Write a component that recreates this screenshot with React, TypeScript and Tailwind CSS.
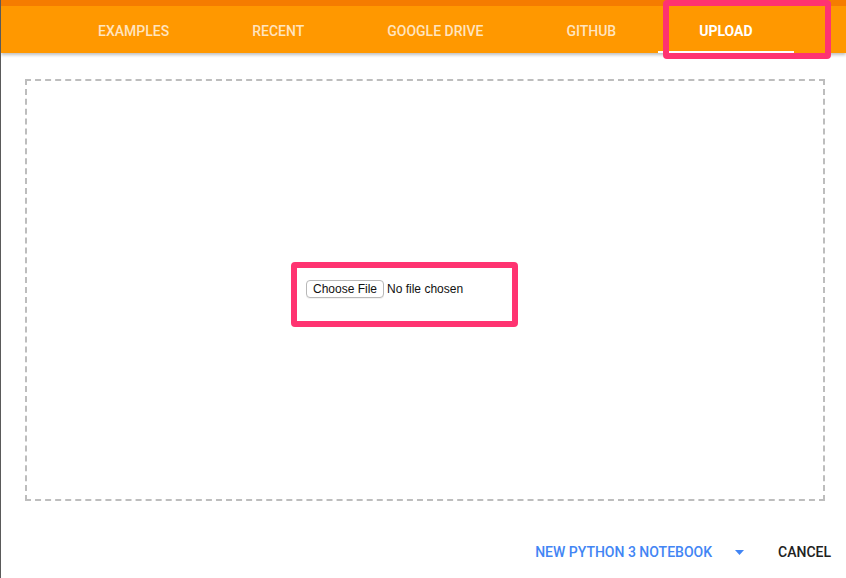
import { useState } from 'react';

const tabs = ['Examples', 'Recent', 'Google Drive', 'GitHub', 'Upload'];

function Header({ active, onSelect }: { active: string; onSelect: (t: string) => void }): JSX.Element {
  return (
    <header className="relative z-10 shadow-[0_2px_3px_rgba(0,0,0,0.25)]">
      <div className="h-[6px] bg-[#f57c00]" />
      <nav className="flex h-[47px] items-stretch bg-[#ff9800] pl-[55.5px]">
        {tabs.map((tab) => {
          const selected = tab === active;
          return (
            <button
              key={tab}
              type="button"
              onClick={() => onSelect(tab)}
              className={`relative flex shrink-0 items-center px-[41.5px] pt-[3px] text-[14px] uppercase ${
                selected ? 'font-bold text-white' : 'font-medium text-white/75'
              }`}
            >
              {tab}
              {selected && <span className="absolute bottom-0 left-0 right-0 h-[2px] bg-white" />}
            </button>
          );
        })}
      </nav>
    </header>
  );
}

function UploadArea(): JSX.Element {
  const [fileName, setFileName] = useState<string>();

  return (
    <div className="ml-[24px] mr-[21px] mt-[26px] h-[422px] border-2 border-dashed border-[#bdbdbd]">
      <div className="flex items-center gap-[3px] pl-[279px] pt-[199px] font-['Liberation_Sans',Arial,sans-serif] text-[12px] text-[#111]">
        <label className="flex h-[18px] cursor-pointer items-center rounded-[4px] border border-[#b8b8b8] bg-white px-[6px] leading-none shadow-[0_1px_0_rgba(0,0,0,0.05)]">
          Choose File
          <input
            type="file"
            className="hidden"
            onChange={(e) => setFileName(e.target.files?.[0]?.name)}
          />
        </label>
        <span>{fileName ?? 'No file chosen'}</span>
      </div>
    </div>
  );
}

export default function App(): JSX.Element {
  const [active, setActive] = useState('Upload');

  return (
    <div className="relative h-[578px] w-full overflow-hidden border-l border-[#5a5a5a] bg-white font-['Roboto',Arial,sans-serif]">
      <Header active={active} onSelect={setActive} />
      <UploadArea />

      <footer className="mt-[40px] flex h-[22px] items-center justify-end pr-[15px] text-[14px] font-medium">
        <button type="button" className="uppercase text-[#4285f4]">
          New Python 3 notebook
        </button>
        <svg className="ml-[23px]" width="9" height="5" viewBox="0 0 9 5" aria-hidden="true">
          <path d="M0 0h9L4.5 5z" fill="#4285f4" />
        </svg>
        <button type="button" className="ml-[34px] uppercase text-[#212121]">
          Cancel
        </button>
      </footer>

      {/* highlight annotations */}
      <div className="pointer-events-none absolute left-[662px] top-0 z-20 h-[59px] w-[168px] rounded-[4px] border-[6px] border-[#ff3371]" />
      <div className="pointer-events-none absolute left-[290px] top-[262px] z-20 h-[65px] w-[227px] rounded-[4px] border-[6px] border-[#ff3371]" />
    </div>
  );
}
